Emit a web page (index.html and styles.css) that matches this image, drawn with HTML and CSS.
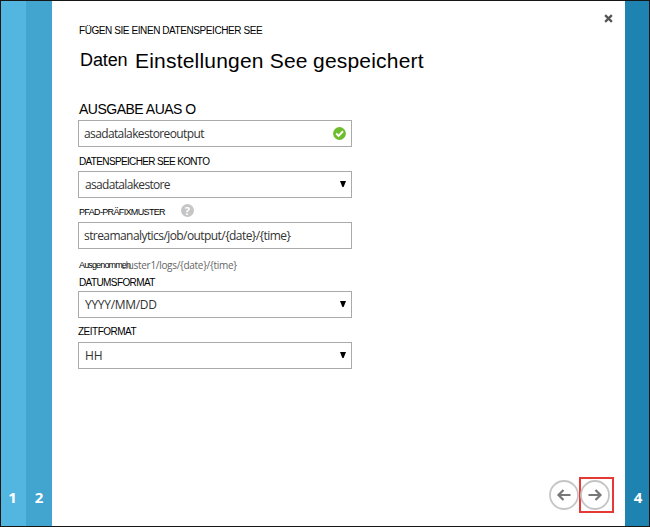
FILE: index.html
```html
<!DOCTYPE html>
<html lang="de">
<head>
<meta charset="utf-8">
<title>Daten Einstellungen See gespeichert</title>
<link rel="stylesheet" href="styles.css">
</head>
<body>
<div class="wizard">
  <aside class="step step-one">1</aside>
  <aside class="step step-two">2</aside>
  <main class="panel">
    <svg class="close" viewBox="0 0 8 8"><path d="M1 1 7 7M7 1 1 7"/></svg>
    <p class="eyebrow"><span>FÜGEN SIE EINEN DATENSPEICHER SEE</span></p>
    <h1><span class="lead">Daten</span><span class="main">Einstellungen See</span><span class="tail">gespeichert</span></h1>
    <form>
      <label class="label-alias"><span>AUSGABE AUAS O</span></label>
      <div class="field"><span class="v1">asadatalakestoreoutput</span>
        <svg class="check" viewBox="0 0 13 13"><circle cx="6.5" cy="6.5" r="6.4"/><path d="M3.2 6.5 5.6 8.9 10 4.3"/></svg>
      </div>
      <label class="label-account"><span>DATENSPEICHER SEE KONTO</span></label>
      <div class="field select"><span class="v2">asadatalakestore</span><i class="arrow"></i></div>
      <label class="label-path"><span>PFAD-PRÄFIXMUSTER</span><b class="help">?</b></label>
      <div class="field"><span class="v3">streamanalytics/job/output/{date}/{time}</span></div>
      <p class="hint"><span class="hint-lead">Ausgenommen</span><span class="hint-path">cluster1/logs/{date}/{time}</span></p>
      <label class="label-date"><span>DATUMSFORMAT</span></label>
      <div class="field select"><span class="v4">YYYY/MM/DD</span><i class="arrow"></i></div>
      <label class="label-time"><span>ZEITFORMAT</span></label>
      <div class="field select"><span class="v5">HH</span><i class="arrow"></i></div>
    </form>
    <nav>
      <svg class="round" viewBox="0 0 30 30"><circle cx="15" cy="15" r="14"/><path d="M21.5 15H10M14.5 10 9.5 15l5 5"/></svg>
      <span class="next"><svg class="round" viewBox="0 0 30 30"><circle cx="15" cy="15" r="14"/><path d="M8.5 15H20M15.5 10l5 5-5 5"/></svg></span>
    </nav>
  </main>
  <aside class="step step-four">4</aside>
</div>
</body>
</html>
```
FILE: styles.css
```css
* { box-sizing: border-box; }
body { margin: 0; font-family: "Liberation Sans", Arial, sans-serif; color: #000; }
.wizard {
  display: grid;
  grid-template-columns: 25px 26px 1fr 24px;
  width: 650px;
  height: 527px;
  border: 1px solid #161616;
  background: #fff;
}
.step {
  display: flex;
  align-items: flex-end;
  justify-content: center;
  padding-bottom: 19px;
  color: #fff;
  font: 700 15px/20px "Open Sans", sans-serif;
}
.step-one { background: #52b6e0; padding-right: 2px; }
.step-two { background: #41a5d0; }
.step-four { background: #1e83b0; padding-left: 2px; }
.panel { position: relative; padding-left: 26px; }
.close { position: absolute; top: 13px; right: 12px; width: 9px; height: 9px; }
.close path { stroke: #555; stroke-width: 2; fill: none; }
p, h1 { margin: 0; font-weight: 400; }
span { white-space: pre; }
.eyebrow { height: 43px; padding: 24px 0 0 1px; font-size: 10px; line-height: 12px; letter-spacing: -0.42px; }
h1 { display: flex; align-items: baseline; height: 56px; padding-left: 2px; font-size: 21px; line-height: 34px; letter-spacing: 0.2px; }
.lead { width: 55px; font-size: 18px; letter-spacing: -0.1px; position: relative; top: -2px; }
.main { width: 178px; }
label { display: flex; align-items: center; height: 24px; padding-left: 1px; font-size: 10px; letter-spacing: -0.6px; }
.label-alias { height: 20px; padding-bottom: 2px; font-size: 14px; letter-spacing: -0.5px; }
.label-account { padding-top: 5px; letter-spacing: -0.65px; }
.label-path { font-size: 9px; padding-top: 4px; letter-spacing: -0.65px; }
.label-time { padding: 3px 0 0; letter-spacing: -0.5px; }
.label-date { height: 18px; }
.field {
  display: flex;
  align-items: center;
  justify-content: space-between;
  width: 274px;
  height: 27px;
  padding: 0 5px;
  border: 1px solid #aaa;
  font: 12px/16px "Open Sans", "Noto Sans", sans-serif;
  color: #333;
}
.select { padding-left: 6px; }
.v1 { letter-spacing: -0.62px; }
.v2 { letter-spacing: -0.67px; }
.v3 { letter-spacing: -0.57px; }
.v4 { letter-spacing: -0.3px; }
.check { width: 13px; height: 13px; }
.check circle { fill: #6fbd2c; }
.check path { fill: none; stroke: #fff; stroke-width: 2; }
.arrow { width: 6px; height: 6px; margin-top: -1px; background: #000; clip-path: polygon(0 0, 100% 0, 60% 100%, 40% 100%); }
.help {
  width: 13px;
  height: 13px;
  margin: -3px 0 0 16px;
  border-radius: 50%;
  background: #c5c5c5;
  color: #fff;
  font: 700 11px/13px "Open Sans", sans-serif;
  letter-spacing: 0;
  text-align: center;
}
.hint { display: flex; align-items: center; height: 24px; padding: 8px 0 0 1px; }
.hint-lead { width: 42px; font-size: 9px; letter-spacing: -0.85px; }
.hint-path { font: 10px/14px "Open Sans", sans-serif; letter-spacing: -0.3px; color: #666; }
nav { position: absolute; right: 11px; bottom: 13px; display: flex; align-items: center; }
.round { display: block; width: 30px; height: 30px; fill: none; }
.round circle { stroke: #c5c5c5; stroke-width: 1.8; }
.round path { stroke: #777; stroke-width: 2.2; }
.next { display: flex; align-items: center; width: 35px; height: 36px; border: 2px solid #e53935; }
.next .round { margin-left: -1px; }
```
